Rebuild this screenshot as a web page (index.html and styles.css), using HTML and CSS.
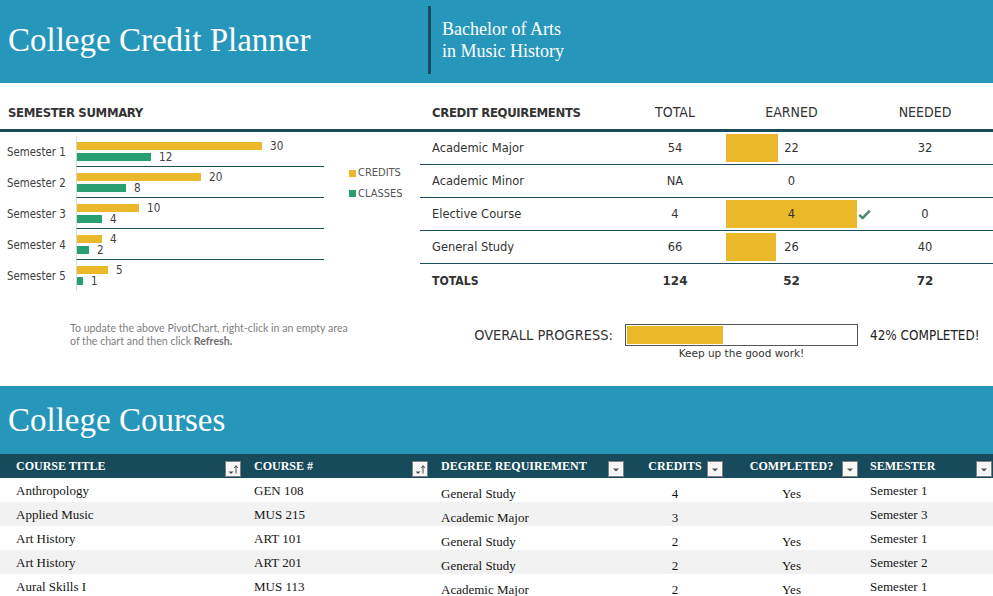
FILE: index.html
```html
<!DOCTYPE html>
<html lang="en">
<head>
<meta charset="utf-8">
<title>College Credit Planner</title>
<link rel="stylesheet" href="styles.css">
</head>
<body>
<header class="banner">
  <h1 class="banner-title">College Credit Planner</h1>
  <div class="banner-rule"></div>
  <p class="banner-degree">Bachelor of Arts<br>in Music History</p>
</header>

<section class="summary">
  <div class="summary-left">
    <div class="section-head"><h2 class="section-title">SEMESTER SUMMARY</h2></div>
    <div class="chart">
      <div class="chart-rows">
        <div class="chart-row">
          <div class="chart-label">Semester 1</div>
          <div class="chart-plot">
            <div class="bar-line"><span class="bar bar-credits" style="width:185px"></span><span class="bar-value">30</span></div>
            <div class="bar-line"><span class="bar bar-classes" style="width:74px"></span><span class="bar-value">12</span></div>
          </div>
        </div>
        <div class="chart-row">
          <div class="chart-label">Semester 2</div>
          <div class="chart-plot">
            <div class="bar-line"><span class="bar bar-credits" style="width:124px"></span><span class="bar-value">20</span></div>
            <div class="bar-line"><span class="bar bar-classes" style="width:49px"></span><span class="bar-value">8</span></div>
          </div>
        </div>
        <div class="chart-row">
          <div class="chart-label">Semester 3</div>
          <div class="chart-plot">
            <div class="bar-line"><span class="bar bar-credits" style="width:62px"></span><span class="bar-value">10</span></div>
            <div class="bar-line"><span class="bar bar-classes" style="width:25px"></span><span class="bar-value">4</span></div>
          </div>
        </div>
        <div class="chart-row">
          <div class="chart-label">Semester 4</div>
          <div class="chart-plot">
            <div class="bar-line"><span class="bar bar-credits" style="width:25px"></span><span class="bar-value">4</span></div>
            <div class="bar-line"><span class="bar bar-classes" style="width:12px"></span><span class="bar-value">2</span></div>
          </div>
        </div>
        <div class="chart-row">
          <div class="chart-label">Semester 5</div>
          <div class="chart-plot">
            <div class="bar-line"><span class="bar bar-credits" style="width:31px"></span><span class="bar-value">5</span></div>
            <div class="bar-line"><span class="bar bar-classes" style="width:6px"></span><span class="bar-value">1</span></div>
          </div>
        </div>
      </div>
      <ul class="legend">
        <li><span class="swatch swatch-credits"></span>CREDITS</li>
        <li><span class="swatch swatch-classes"></span>CLASSES</li>
      </ul>
    </div>
    <p class="chart-note">To update the above PivotChart, right-click in an empty area<br>of the chart and then click <b>Refresh.</b></p>
  </div>

  <div class="summary-right">
    <div class="req">
      <div class="req-row req-head">
        <div class="req-name"><h2 class="section-title">CREDIT REQUIREMENTS</h2></div>
        <div class="req-total">TOTAL</div>
        <div class="req-earned">EARNED</div>
        <div class="req-check"></div>
        <div class="req-needed">NEEDED</div>
      </div>
      <div class="req-row">
        <div class="req-name">Academic Major</div>
        <div class="req-total">54</div>
        <div class="req-earned has-bar" style="--bar:52px">22</div>
        <div class="req-check"></div>
        <div class="req-needed">32</div>
      </div>
      <div class="req-row">
        <div class="req-name">Academic Minor</div>
        <div class="req-total">NA</div>
        <div class="req-earned">0</div>
        <div class="req-check"></div>
        <div class="req-needed"></div>
      </div>
      <div class="req-row">
        <div class="req-name">Elective Course</div>
        <div class="req-total">4</div>
        <div class="req-earned has-bar" style="--bar:131px">4</div>
        <div class="req-check"><svg class="check" viewBox="0 0 13 11" width="13" height="11"><path d="M1.2 5.8 L4.6 9.2 L11.8 1.6" fill="none" stroke="#4f8a6e" stroke-width="2.6" stroke-linejoin="round"/></svg></div>
        <div class="req-needed">0</div>
      </div>
      <div class="req-row">
        <div class="req-name">General Study</div>
        <div class="req-total">66</div>
        <div class="req-earned has-bar" style="--bar:50px">26</div>
        <div class="req-check"></div>
        <div class="req-needed">40</div>
      </div>
      <div class="req-row req-totals">
        <div class="req-name">TOTALS</div>
        <div class="req-total">124</div>
        <div class="req-earned">52</div>
        <div class="req-check"></div>
        <div class="req-needed">72</div>
      </div>
    </div>

    <div class="progress">
      <div class="progress-label">OVERALL PROGRESS:</div>
      <div class="progress-box"><div class="progress-fill" style="width:96px"></div></div>
      <div class="progress-pct">42% COMPLETED!</div>
      <div class="progress-msg">Keep up the good work!</div>
    </div>
  </div>
</section>

<section class="courses">
  <div class="courses-band"><h2 class="courses-title">College Courses</h2></div>
  <table class="course-table">
    <colgroup>
      <col class="w-title"><col class="w-num"><col class="w-req"><col class="w-cred"><col class="w-done"><col class="w-sem">
    </colgroup>
    <thead>
      <tr>
        <th class="h-title"><div class="th-in"><span class="th-text">COURSE TITLE</span><span class="filter"><svg viewBox="0 0 14 14" width="14" height="14"><path d="M2.5 9.5h5l-2.5 2.5z" fill="#4a4a4a"/><path d="M10 4v7.5" stroke="#4a4a4a" stroke-width="1"/><path d="M8.3 6 L10 3.6 L11.7 6" fill="none" stroke="#4a4a4a" stroke-width="1"/></svg></span></div></th>
        <th class="h-num"><div class="th-in"><span class="th-text">COURSE #</span><span class="filter"><svg viewBox="0 0 14 14" width="14" height="14"><path d="M2.5 9.5h5l-2.5 2.5z" fill="#4a4a4a"/><path d="M10 4v7.5" stroke="#4a4a4a" stroke-width="1"/><path d="M8.3 6 L10 3.6 L11.7 6" fill="none" stroke="#4a4a4a" stroke-width="1"/></svg></span></div></th>
        <th class="h-req"><div class="th-in"><span class="th-text">DEGREE REQUIREMENT</span><span class="filter"><svg viewBox="0 0 14 14" width="14" height="14"><path d="M4 6.5h6l-3 3z" fill="#555"/></svg></span></div></th>
        <th class="h-cred"><div class="th-in"><span class="th-text th-center">CREDITS</span><span class="filter"><svg viewBox="0 0 14 14" width="14" height="14"><path d="M4 6.5h6l-3 3z" fill="#555"/></svg></span></div></th>
        <th class="h-done"><div class="th-in"><span class="th-text th-center">COMPLETED?</span><span class="filter"><svg viewBox="0 0 14 14" width="14" height="14"><path d="M4 6.5h6l-3 3z" fill="#555"/></svg></span></div></th>
        <th class="h-sem"><div class="th-in"><span class="th-text">SEMESTER</span><span class="filter"><svg viewBox="0 0 14 14" width="14" height="14"><path d="M4 6.5h6l-3 3z" fill="#555"/></svg></span></div></th>
      </tr>
    </thead>
    <tbody>
      <tr><td class="c-title">Anthropology</td><td class="c-num">GEN 108</td><td class="c-req">General Study</td><td class="c-cred">4</td><td class="c-done">Yes</td><td class="c-sem">Semester 1</td></tr>
      <tr><td class="c-title">Applied Music</td><td class="c-num">MUS 215</td><td class="c-req">Academic Major</td><td class="c-cred">3</td><td class="c-done"></td><td class="c-sem">Semester 3</td></tr>
      <tr><td class="c-title">Art History</td><td class="c-num">ART 101</td><td class="c-req">General Study</td><td class="c-cred">2</td><td class="c-done">Yes</td><td class="c-sem">Semester 1</td></tr>
      <tr><td class="c-title">Art History</td><td class="c-num">ART 201</td><td class="c-req">General Study</td><td class="c-cred">2</td><td class="c-done">Yes</td><td class="c-sem">Semester 2</td></tr>
      <tr><td class="c-title">Aural Skills I</td><td class="c-num">MUS 113</td><td class="c-req">Academic Major</td><td class="c-cred">2</td><td class="c-done">Yes</td><td class="c-sem">Semester 1</td></tr>
    </tbody>
  </table>
</section>
</body>
</html>
```

FILE: styles.css
```css
* { box-sizing: border-box; }
html, body { margin: 0; padding: 0; }
body {
  width: 993px;
  background: #fff;
  color: #333;
  font-family: "DejaVu Sans", sans-serif;
  overflow: hidden;
}

/* ---------- banner ---------- */
.banner {
  display: flex;
  align-items: flex-start;
  height: 83px;
  background: #2697bb;
  color: #fff;
}
.banner-title {
  width: 428px;
  margin: 0;
  padding: 24px 0 0 8px;
  font: normal 33px/33px "Liberation Serif", serif;
}
.banner-rule {
  width: 3px;
  height: 68px;
  margin-top: 6px;
  background: #1b4b5c;
}
.banner-degree {
  margin: 0;
  padding: 18px 0 0 11px;
  font: 18px/22px "Liberation Serif", serif;
}

/* ---------- summary ---------- */
.summary { display: flex; height: 303px; }
.summary-left { width: 420px; }
.summary-right { flex: 1; }

.section-head {
  height: 49px;
  padding: 0 0 9px 8px;
  border-bottom: 3px solid #1b4b58;
  display: flex;
  align-items: flex-end;
}
.section-title {
  margin: 0;
  font: bold 13px/15px "DejaVu Sans Condensed", "Liberation Sans", sans-serif;
  letter-spacing: -0.35px;
  color: #333;
}

/* chart */
.chart { display: flex; padding-top: 4px; }
.chart-rows { width: 324px; }
.chart-row { display: flex; height: 31px; }
.chart-label {
  width: 76px;
  padding-left: 7px;
  display: flex;
  align-items: center;
  font: 11.4px/14px "DejaVu Sans Condensed", "Liberation Sans", sans-serif;
  color: #404040;
}
.chart-plot {
  width: 248px;
  border-left: 1px solid #d9d9d9;
  border-bottom: 1px solid #1d4f5c;
  padding-top: 6px;
  display: flex;
  flex-direction: column;
  gap: 3px;
}
.chart-row:last-child .chart-plot { border-bottom: 0; }
.bar-line { display: flex; align-items: center; height: 8px; }
.bar { display: block; height: 8px; }
.bar-credits { background: #ebb82a; }
.bar-classes { background: #27a070; }
.bar-value {
  margin-left: 8px;
  font: 11.6px/8px "DejaVu Sans Condensed", "Liberation Sans", sans-serif;
  color: #404040;
}

.legend {
  list-style: none;
  margin: 27px 0 0 25px;
  padding: 0;
  font: 11px/20.5px "DejaVu Sans Condensed", "Liberation Sans", sans-serif;
  color: #555;
}
.legend li { display: flex; align-items: center; }
.swatch { width: 7px; height: 7px; margin-right: 2px; }
.swatch-credits { background: #ebb82a; }
.swatch-classes { background: #27a070; }

.chart-note {
  margin: 31px 0 0 70px;
  font: 10.6px/12.5px "Lato", "Open Sans", sans-serif;
  color: #808080;
}
.chart-note b { font-weight: bold; color: #6f6f6f; }

/* requirements */
.req-row {
  display: grid;
  grid-template-columns: 220px 86px 131px 23px 90px 1fr;
  height: 33px;
  border-bottom: 1px solid #1d4f5c;
  font-size: 11.5px;
  color: #333;
}
.req-row > div { display: flex; align-items: center; }
.req-name { padding-left: 12px; }
.req-total { justify-content: center; padding-right: 16px; }
.req-earned { justify-content: center; }
.req-needed { justify-content: center; }
.req-check { padding-left: 1px; }
.req-earned.has-bar {
  background: linear-gradient(#ebb82a, #ebb82a) no-repeat 0 2px / var(--bar) 28px;
}

.req-head {
  height: 49px;
  border-bottom: 3px solid #1b4b58;
  padding-bottom: 9px;
}
.req-head > div {
  align-items: flex-end;
  font: 14px/16px "DejaVu Sans Condensed", "Liberation Sans", sans-serif;
  color: #333;
}
.req-totals { border-bottom: 0; font-weight: bold; font-size: 12px; }
.req-totals .req-name {
  font: bold 12.2px/14px "DejaVu Sans Condensed", "Liberation Sans", sans-serif;
}

/* progress */
.progress {
  display: grid;
  grid-template-columns: 193px 233px auto;
  grid-template-areas: "label box pct" ". msg .";
  column-gap: 12px;
  margin-top: 27px;
  align-items: center;
}
.progress-label {
  grid-area: label;
  text-align: right;
  white-space: nowrap;
  font: 14.5px/17px "DejaVu Sans Condensed", "Liberation Sans", sans-serif;
  color: #333;
}
.progress-box {
  grid-area: box;
  height: 22px;
  border: 1px solid #555;
  padding: 1px;
}
.progress-fill { height: 18px; background: #ebb82a; }
.progress-pct {
  grid-area: pct;
  white-space: nowrap;
  font: 13.4px/17px "DejaVu Sans Condensed", "Liberation Sans", sans-serif;
  color: #222;
}
.progress-msg {
  grid-area: msg;
  text-align: center;
  margin-top: 1px;
  font: 10.5px/13px "DejaVu Sans", sans-serif;
  color: #333;
}

/* ---------- courses ---------- */
.courses-band {
  height: 68px;
  background: #2697bb;
  padding: 18px 0 0 8px;
}
.courses-title {
  margin: 0;
  font: normal 33px/33px "Liberation Serif", serif;
  color: #fff;
}

.course-table {
  width: 993px;
  table-layout: fixed;
  border-collapse: collapse;
  font-family: "Liberation Serif", serif;
}
.w-title { width: 246px; }
.w-num { width: 187px; }
.w-req { width: 195px; }
.w-cred { width: 99px; }
.w-done { width: 135px; }
.w-sem { width: 131px; }

.course-table th {
  height: 24px;
  padding: 0;
  background: #174b5b;
  color: #fff;
  font: bold 12px/14px "Liberation Serif", serif;
  text-align: left;
}
.th-in { display: flex; align-items: center; height: 24px; }
.th-text { flex: 1; white-space: nowrap; }
.th-center { text-align: center; }
.filter {
  width: 16px;
  height: 16px;
  align-self: flex-end;
  margin-bottom: 1px;
  border: 1px solid #7f7f7f;
  background: #f7f7f7;
  display: flex;
}
.h-title .th-in { padding: 0 5px 0 16px; }
.h-num .th-in { padding: 0 5px 0 8px; }
.h-req .th-in { padding: 0 4px 0 8px; }
.h-cred .th-in { padding: 0 4px 0 15px; }
.h-done .th-in { padding: 0 4px 0 14px; }
.h-sem .th-in { padding: 0 1px 0 8px; }

.course-table td {
  height: 24px;
  padding: 0;
  font-size: 13px;
  line-height: 15px;
  color: #151515;
  vertical-align: middle;
  white-space: nowrap;
}
.course-table tbody tr:nth-child(even) td { background: #f2f2f2; }
.course-table .c-title { padding-left: 16px; }
.course-table .c-num { padding-left: 8px; }
.course-table .c-req { padding-left: 8px; padding-bottom: 1px; vertical-align: bottom; }
.course-table .c-cred { text-align: center; padding-right: 5px; padding-bottom: 1px; vertical-align: bottom; }
.course-table .c-done { text-align: center; padding-right: 6px; padding-bottom: 1px; vertical-align: bottom; }
.course-table .c-sem { padding-left: 8px; }
```
